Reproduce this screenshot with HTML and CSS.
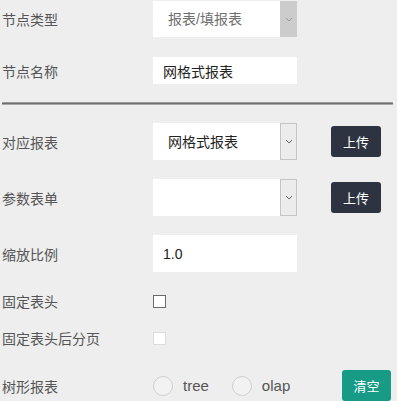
FILE: index.html
```html
<!DOCTYPE html>
<html lang="zh-CN">
<head>
    <meta charset="UTF-8">
    <title>节点设置</title>
    <link rel="stylesheet" href="styles.css">
</head>
<body>
    <form class="panel">
        <div class="row row-type">
            <label class="label">节点类型</label>
            <div class="select disabled">
                <select disabled>
                    <option>报表/填报表</option>
                </select>
                <span class="caret"><svg width="8" height="5" viewBox="0 0 8 5"><path d="M1 1l3 3 3-3" fill="none" stroke="#999" stroke-width="1"/></svg></span>
            </div>
        </div>

        <div class="row row-name">
            <label class="label">节点名称</label>
            <input class="text short" type="text" value="网格式报表">
        </div>

        <div class="divider"></div>

        <div class="row row-report">
            <label class="label">对应报表</label>
            <div class="select">
                <select>
                    <option>网格式报表</option>
                </select>
                <span class="caret"><svg width="8" height="5" viewBox="0 0 8 5"><path d="M1 1l3 3 3-3" fill="none" stroke="#666" stroke-width="1"/></svg></span>
            </div>
            <button type="button" class="btn btn-dark">上传</button>
        </div>

        <div class="row row-param">
            <label class="label">参数表单</label>
            <div class="select">
                <select>
                    <option></option>
                </select>
                <span class="caret"><svg width="8" height="5" viewBox="0 0 8 5"><path d="M1 1l3 3 3-3" fill="none" stroke="#666" stroke-width="1"/></svg></span>
            </div>
            <button type="button" class="btn btn-dark">上传</button>
        </div>

        <div class="row row-scale">
            <label class="label">缩放比例</label>
            <input class="text" type="text" value="1.0">
        </div>

        <div class="row row-fix">
            <label class="label">固定表头</label>
            <input class="check" type="checkbox">
        </div>

        <div class="row row-page">
            <label class="label">固定表头后分页</label>
            <input class="check" type="checkbox" disabled>
        </div>

        <div class="row row-tree">
            <label class="label">树形报表</label>
            <div class="radios">
                <label class="radio"><input type="radio" name="tree"> tree</label>
                <label class="radio"><input type="radio" name="tree"> olap</label>
            </div>
            <button type="button" class="btn btn-green">清空</button>
        </div>
    </form>
</body>
</html>
```

FILE: styles.css
```css
/* 全局 */
body {
    margin: 0;
    background: #eeeeee;
    font-family: "Liberation Sans", "Noto Sans CJK SC", sans-serif;
    color: #555;
}

.panel {
    padding: 0 4px 0 2px;
}

/* 每一行 */
.row {
    display: flex;
    align-items: center;
}

.label {
    width: 151px;
    flex: none;
    font-size: 14px;
    color: #555;
}

.row-type { height: 38px; }
.row-name { height: 27px; margin-top: 19px; }
.row-report { height: 37px; margin-top: 18px; }
.row-param { height: 37px; margin-top: 19px; }
.row-scale { height: 37px; margin-top: 19px; }
.row-fix { height: 26px; margin-top: 16px; }
.row-page { height: 26px; margin-top: 11px; }
.row-tree { height: 31px; margin-top: 19px; }

/* 分割线 */
.divider {
    height: 1px;
    margin: 18px 0 0;
    background: #6e6e6e;
    border-top: 1px solid #9a9a9a;
    border-bottom: 1px solid #a8a8a8;
    border-radius: 1px;
}

/* 下拉框 */
.select {
    display: flex;
    width: 144px;
    height: 37px;
    background: #fff;
}

.row-type .select {
    height: 36px;
}

.select select {
    flex: 1;
    min-width: 0;
    appearance: none;
    -webkit-appearance: none;
    border: none;
    outline: none;
    background: transparent;
    padding: 0 0 0 15px;
    font-family: "Liberation Sans", "Noto Sans CJK SC", sans-serif;
    font-size: 14px;
    color: #222;
    opacity: 1;
}

.select.disabled select {
    color: #6f6f6f;
}

.caret {
    width: 15px;
    display: flex;
    align-items: center;
    justify-content: center;
    background: #ececec;
    border: 1px solid #c4c4c4;
}

.select.disabled .caret {
    background: #cccccc;
    border-color: #cccccc;
}

/* 输入框 */
.text {
    box-sizing: border-box;
    width: 144px;
    height: 37px;
    border: none;
    outline: none;
    background: #fff;
    padding: 0 10px;
    font-family: "Liberation Sans", "Noto Sans CJK SC", sans-serif;
    font-size: 14px;
    color: #222;
}

.text.short {
    height: 27px;
}

/* 复选框 */
.check {
    appearance: none;
    -webkit-appearance: none;
    box-sizing: border-box;
    width: 13px;
    height: 13px;
    margin: 0;
    border: 1px solid #6a6a6a;
    background: #fff;
}

.check:disabled {
    border-color: #dcdcdc;
}

/* 单选 */
.radios {
    display: flex;
    align-items: center;
    gap: 23px;
    width: 189px;
}

.radio {
    display: flex;
    align-items: center;
    gap: 10px;
    font-size: 15px;
    color: #555;
}

.radio input {
    appearance: none;
    -webkit-appearance: none;
    box-sizing: border-box;
    width: 20px;
    height: 20px;
    margin: 0;
    border: 1px solid #cfcfcf;
    border-radius: 50%;
    background: #f2f2f2;
}

/* 按钮 */
.btn {
    border: none;
    border-radius: 3px;
    height: 31px;
    color: #fff;
    font-family: "Noto Sans CJK SC", sans-serif;
    font-size: 13px;
    padding: 0;
    cursor: pointer;
}

.btn-dark {
    width: 50px;
    margin-left: 34px;
    background: #2e3341;
}

.btn-green {
    width: 49px;
    background: #179a86;
}
```
